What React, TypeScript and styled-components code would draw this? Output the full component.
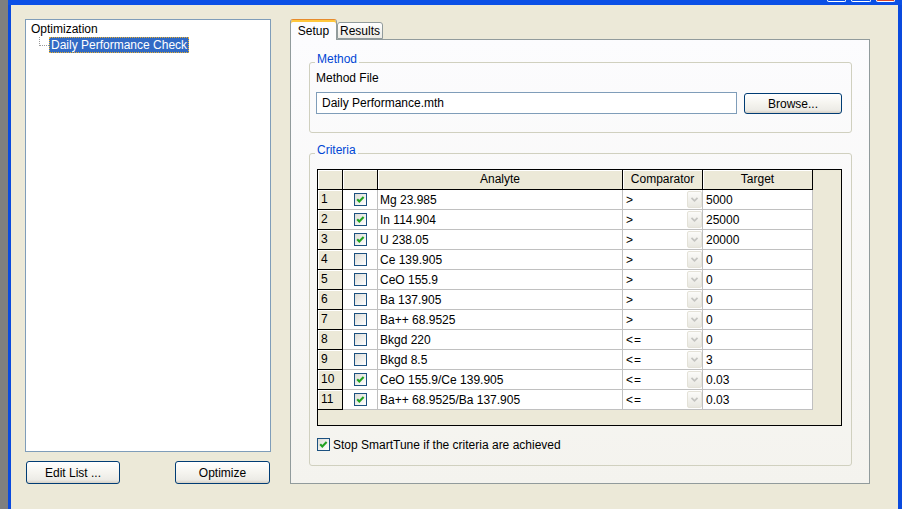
import React from "react";
import styled, { createGlobalStyle } from "styled-components";

interface Criterion {
  id: number;
  on: boolean;
  analyte: string;
  comparator: string;
  target: string;
}

const rows: Criterion[] = [
  { id: 1, on: true, analyte: "Mg 23.985", comparator: ">", target: "5000" },
  { id: 2, on: true, analyte: "In 114.904", comparator: ">", target: "25000" },
  { id: 3, on: true, analyte: "U 238.05", comparator: ">", target: "20000" },
  { id: 4, on: false, analyte: "Ce 139.905", comparator: ">", target: "0" },
  { id: 5, on: false, analyte: "CeO 155.9", comparator: ">", target: "0" },
  { id: 6, on: false, analyte: "Ba 137.905", comparator: ">", target: "0" },
  { id: 7, on: false, analyte: "Ba++ 68.9525", comparator: ">", target: "0" },
  { id: 8, on: false, analyte: "Bkgd 220", comparator: "<=", target: "0" },
  { id: 9, on: false, analyte: "Bkgd 8.5", comparator: "<=", target: "3" },
  { id: 10, on: true, analyte: "CeO 155.9/Ce 139.905", comparator: "<=", target: "0.03" },
  { id: 11, on: true, analyte: "Ba++ 68.9525/Ba 137.905", comparator: "<=", target: "0.03" },
];

const GlobalStyle = createGlobalStyle`
  html, body {
    margin: 0;
    padding: 0;
  }
  body {
    font-family: "Liberation Sans", Arial, sans-serif;
    font-size: 12px;
    color: #000;
    background: #808080;
  }
  * {
    box-sizing: border-box;
  }
`;

function CheckBox({ checked }: { checked: boolean }) {
  return (
    <Box>
      {checked && (
        <svg width="11" height="11" viewBox="0 0 11 11">
          <polyline
            points="2.2,5.2 4.3,7.4 8.6,3"
            fill="none"
            stroke="#21a121"
            strokeWidth="2.1"
          />
        </svg>
      )}
    </Box>
  );
}

function DropArrow() {
  return (
    <DropButton>
      <svg width="9" height="7" viewBox="0 0 9 7">
        <polyline points="1.5,1.8 4.5,4.8 7.5,1.8" fill="none" stroke="#c3c3c0" strokeWidth="1.7" />
      </svg>
    </DropButton>
  );
}

export default function App() {
  return (
    <Page>
      <GlobalStyle />
      <Gutter />
      <Window>
        <TitleBar>
          <Stub $w={19} />
          <Stub $w={20} />
          <Stub $w={19} $close />
        </TitleBar>
        <Client>
          <LeftColumn>
            <TreeBox>
              <TreeRow>Optimization</TreeRow>
              <ChildRow>
                <Branch />
                <Selected>Daily Performance Check</Selected>
              </ChildRow>
            </TreeBox>
            <ButtonRow>
              <XPButton $w={94}>Edit List ...</XPButton>
              <XPButton $w={95}>Optimize</XPButton>
            </ButtonRow>
          </LeftColumn>

          <RightColumn>
            <TabStrip>
              <Tab $active>Setup</Tab>
              <Tab>Results</Tab>
            </TabStrip>
            <TabPanel>
              <GroupBox $h={71} $pad="8px 9px 0 6px">
                <GroupTitle $bg="#fcfcfd">Method</GroupTitle>
                <FieldLabel>Method File</FieldLabel>
                <FileRow>
                  <FileInput>Daily Performance.mth</FileInput>
                  <XPButton $w={98} $h={21}>Browse...</XPButton>
                </FileRow>
              </GroupBox>

              <GroupBox $h={313} $pad="15px 0 0 7px">
                <GroupTitle $bg="#fafafa">Criteria</GroupTitle>
                <GridBox>
                  <GridRow>
                    <HeadCell />
                    <HeadCell />
                    <HeadCell>Analyte</HeadCell>
                    <HeadCell>Comparator</HeadCell>
                    <HeadCell>Target</HeadCell>
                  </GridRow>
                  {rows.map((r) => (
                    <GridRow key={r.id}>
                      <RowHead>{r.id}</RowHead>
                      <Cell $center>
                        <CheckBox checked={r.on} />
                      </Cell>
                      <Cell $pad={2}>{r.analyte}</Cell>
                      <CompCell>
                        <CompText>{r.comparator}</CompText>
                        <DropArrow />
                      </CompCell>
                      <Cell $pad={3}>{r.target}</Cell>
                    </GridRow>
                  ))}
                </GridBox>
                <CheckLine>
                  <CheckBox checked />
                  <span>Stop SmartTune if the criteria are achieved</span>
                </CheckLine>
              </GroupBox>
            </TabPanel>
          </RightColumn>
        </Client>
      </Window>
    </Page>
  );
}

const Page = styled.div`
  width: 902px;
  height: 509px;
  display: flex;
  overflow: hidden;
`;

const Gutter = styled.div`
  width: 8px;
  flex-shrink: 0;
  background: #7f7f7f;
`;

const Window = styled.div`
  flex: 1;
  display: flex;
  flex-direction: column;
  background: #0a4ade;
  padding: 0 4px 0 3px;
`;

const TitleBar = styled.div`
  height: 5px;
  display: flex;
  justify-content: flex-end;
  align-items: flex-start;
  gap: 5px;
  background: #0b50e6;
  margin: 0 -4px 0 -3px;
  padding-right: 7px;
`;

const Stub = styled.div<{ $w: number; $close?: boolean }>`
  width: ${({ $w }) => $w}px;
  height: 2px;
  border: 1px solid #ffffff;
  border-top: none;
  border-radius: 0 0 2px 2px;
  background: ${({ $close }) => ($close ? "#d9462b" : "transparent")};
`;

const Client = styled.div`
  flex: 1;
  display: flex;
  gap: 19px;
  background: #ece9d8;
  padding: 14px 0 0 14px;
`;

const LeftColumn = styled.div`
  width: 246px;
  display: flex;
  flex-direction: column;
`;

const TreeBox = styled.div`
  height: 433px;
  background: #ffffff;
  border: 1px solid #7f9db9;
  padding: 1px 0 0 5px;
`;

const TreeRow = styled.div`
  height: 16px;
  line-height: 16px;
  white-space: nowrap;
`;

const ChildRow = styled.div`
  height: 16px;
  display: flex;
  align-items: flex-start;
  padding-left: 8px;
`;

const Branch = styled.span`
  width: 10px;
  height: 9px;
  border-left: 1px dotted #9a9a9a;
  border-bottom: 1px dotted #9a9a9a;
`;

const Selected = styled.span`
  height: 16px;
  line-height: 16px;
  padding: 0 2px;
  background: #316ac5;
  color: #ffffff;
  outline: 1px dotted #e8b030;
  outline-offset: -1px;
  white-space: nowrap;
`;

const ButtonRow = styled.div`
  display: flex;
  justify-content: space-between;
  margin-top: 9px;
  padding: 0 1px;
`;

const XPButton = styled.button<{ $w: number; $h?: number }>`
  width: ${({ $w }) => $w}px;
  height: ${({ $h }) => $h ?? 23}px;
  flex-shrink: 0;
  padding: 0;
  border: 1px solid #003c74;
  border-radius: 3px;
  background: linear-gradient(to bottom, #ffffff 0%, #f5f4ef 50%, #ecebe6 85%, #d6d0c5 100%);
  font-family: inherit;
  font-size: 12px;
  color: #000;
`;

const RightColumn = styled.div`
  width: 580px;
  display: flex;
  flex-direction: column;
`;

const TabStrip = styled.div`
  height: 20px;
  display: flex;
  align-items: flex-end;
`;

const Tab = styled.div<{ $active?: boolean }>`
  position: relative;
  z-index: 1;
  display: flex;
  align-items: center;
  justify-content: center;
  width: ${({ $active }) => ($active ? 47 : 46)}px;
  height: ${({ $active }) => ($active ? 21 : 17)}px;
  margin-bottom: ${({ $active }) => ($active ? -1 : 0)}px;
  border: 1px solid #919b9c;
  border-bottom: ${({ $active }) => ($active ? "none" : "1px solid #919b9c")};
  border-top-color: ${({ $active }) => ($active ? "#e68b2c" : "#919b9c")};
  border-radius: 3px 3px 0 0;
  box-shadow: ${({ $active }) => ($active ? "inset 0 2px 0 #ffc73c" : "none")};
  background: ${({ $active }) =>
    $active ? "#fcfcfe" : "linear-gradient(to bottom, #ffffff, #ecebe5)"};
  padding-top: ${({ $active }) => ($active ? 1 : 0)}px;
`;

const TabPanel = styled.div`
  height: 445px;
  border: 1px solid #919b9c;
  background: linear-gradient(to bottom, #fcfcfe 0%, #f4f3ee 100%);
  padding: 22px 17px 0 18px;
  display: flex;
  flex-direction: column;
  gap: 20px;
`;

const GroupBox = styled.div<{ $h: number; $pad: string }>`
  position: relative;
  height: ${({ $h }) => $h}px;
  border: 1px solid #d0d0bf;
  border-radius: 3px;
  padding: ${({ $pad }) => $pad};
`;

const GroupTitle = styled.div<{ $bg: string }>`
  position: absolute;
  top: -11px;
  left: 5px;
  padding: 0 2px;
  line-height: 14px;
  color: #0046d5;
  background: ${({ $bg }) => $bg};
`;

const FieldLabel = styled.div`
  line-height: 14px;
`;

const FileRow = styled.div`
  display: flex;
  gap: 7px;
  align-items: flex-start;
  margin-top: 7px;
`;

const FileInput = styled.div`
  width: 422px;
  height: 22px;
  line-height: 20px;
  border: 1px solid #7f9db9;
  background: #ffffff;
  padding-left: 5px;
  & + button {
    margin-top: 1px;
  }
`;

const GridBox = styled.div`
  width: 525px;
  height: 257px;
  border: 1px solid #000;
  background: #ece9d8;
`;

const GridRow = styled.div`
  display: grid;
  grid-template-columns: 25px 35px 245px 80px 110px;
  height: 20px;
`;

const HeadCell = styled.div`
  border-right: 1px solid #000;
  border-bottom: 1px solid #000;
  box-shadow: inset 1px 1px 0 #ffffff;
  text-align: center;
  line-height: 19px;
`;

const RowHead = styled.div`
  border-right: 1px solid #000;
  border-bottom: 1px solid #000;
  box-shadow: inset 1px 1px 0 #ffffff;
  padding-left: 3px;
  line-height: 19px;
`;

const Cell = styled.div<{ $pad?: number; $center?: boolean }>`
  display: flex;
  align-items: center;
  justify-content: ${({ $center }) => ($center ? "center" : "flex-start")};
  padding-left: ${({ $pad }) => $pad ?? 0}px;
  background: #ffffff;
  border-right: 1px solid #c0c0c0;
  border-bottom: 1px solid #c0c0c0;
  white-space: nowrap;
`;

const CompCell = styled(Cell)`
  justify-content: space-between;
  padding-left: 3px;
`;

const CompText = styled.span`
  letter-spacing: 1px;
`;

const DropButton = styled.div`
  width: 15px;
  height: 17px;
  display: flex;
  align-items: center;
  justify-content: center;
  border: 1px solid #e4e2d8;
  border-radius: 2px;
  background: linear-gradient(to bottom, #fbfbf9, #e8e7e0);
`;

const Box = styled.div`
  width: 13px;
  height: 13px;
  flex-shrink: 0;
  display: flex;
  align-items: center;
  justify-content: center;
  border: 1px solid #1c5180;
  background: linear-gradient(135deg, #dcdcd7 0%, #ffffff 100%);
`;

const CheckLine = styled.div`
  display: flex;
  align-items: center;
  gap: 3px;
  height: 13px;
  margin-top: 12px;
`;
